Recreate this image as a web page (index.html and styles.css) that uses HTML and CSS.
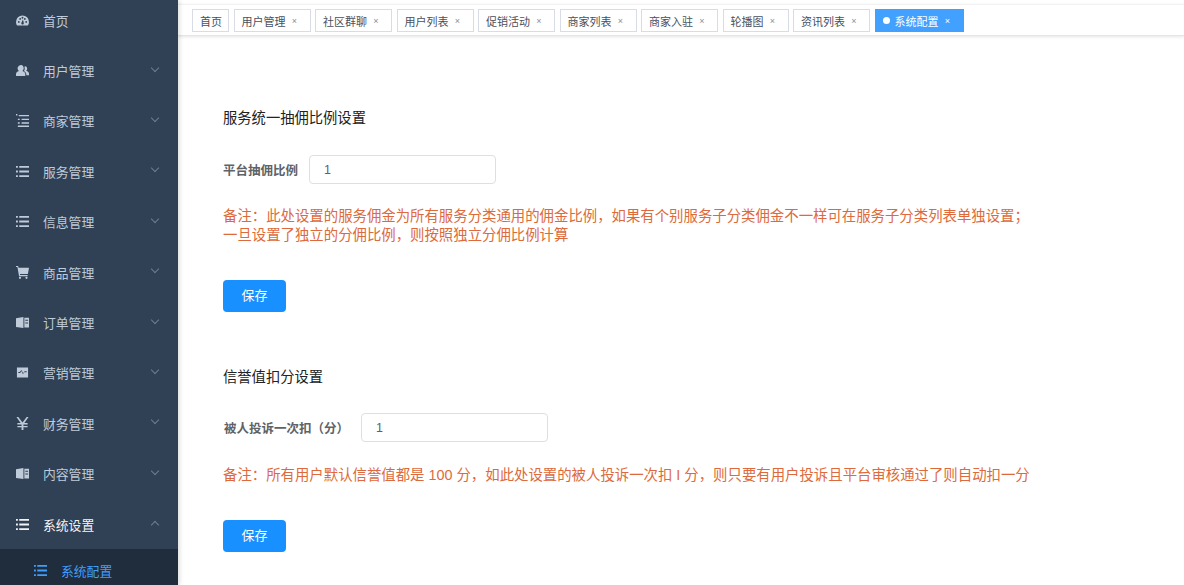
FILE: index.html
```html
<!DOCTYPE html>
<html lang="zh-CN">
<head>
<meta charset="utf-8">
<title>系统配置</title>
<link rel="stylesheet" href="styles.css">
</head>
<body>
<svg class="defs" width="0" height="0" aria-hidden="true">
  <symbol id="i-list" viewBox="0 0 14 14"><path d="M0 1h2v2H0zM3.500 1H14v2H3.500zM0 6h2v2H0zM3.500 6H14v2H3.500zM0 11h2v2H0zM3.500 11H14v2H3.500z"/></symbol>
  <symbol id="i-list2" viewBox="0 0 14 14"><path d="M0 0h1.500v1.500H0zM3 1h11v1.500H3zM2 5h2v1.500H2zM6 5h8v1.500H6zM2 9h2v1.500H2zM6 9h8v1.500H6zM2 12.500h12V14H2z"/></symbol>
  <symbol id="i-dash" viewBox="0 0 14 14"><path d="M7 1.500a7 7 0 0 0-7 7c0 1.500.5 2.900 1.300 4h11.400A7 7 0 0 0 14 8.500a7 7 0 0 0-7-7zM3 9.500a1 1 0 1 1 0-2 1 1 0 0 1 0 2zm1.500-3.200a1 1 0 1 1 0-2 1 1 0 0 1 0 2zM7 5a1 1 0 1 1 0-2 1 1 0 0 1 0 2zm1.200 5.800a1.400 1.400 0 0 1-2.500-1.100L7.500 6l.9 3.700c.1.400 0 .800-.2 1.100zm1.300-4.500a1 1 0 1 1 0-2 1 1 0 0 1 0 2zM11 9.500a1 1 0 1 1 0-2 1 1 0 0 1 0 2z"/></symbol>
  <symbol id="i-user" viewBox="0 0 14 14"><path d="M5.500 1c1.700 0 2.800 1.500 2.800 3.400 0 1.300-.6 2.500-1.500 3.200 2 .5 3.200 1.700 3.200 3.400V13H0v-2c0-1.700 1.200-2.900 3.200-3.400-.9-.7-1.500-1.900-1.500-3.200C1.700 2.500 3.800 1 5.500 1zM10 2.500c1.200.2 2 1.200 2 2.500 0 1-.5 1.900-1.200 2.400 1.400.4 3.200 1.300 3.200 2.800V12h-2.800c0-2-1-3.500-2.700-4.400.6-.8.900-1.500.9-2.400 0-.8-.2-1.600-.4-2.200z"/></symbol>
  <symbol id="i-cart" viewBox="0 0 14 14"><path d="M0 0h2.300l.5 2H14l-1.200 6.500H4.300l.2 1.300h8V11H3.300L1.500 1.200H0zM4.300 11.500a1.200 1.200 0 1 1 0 2.400 1.200 1.200 0 0 1 0-2.400zm7 0a1.200 1.200 0 1 1 0 2.400 1.200 1.200 0 0 1 0-2.400z"/></symbol>
  <symbol id="i-book" viewBox="0 0 14 14"><path d="M0 2.500 8 1v12l-8-1.200zM9 2h5v10.500H9zm1 2v1h3V4zm0 3v1h3V7z"/></symbol>
  <symbol id="i-chart" viewBox="0 0 14 14"><path fill-rule="evenodd" d="M1 1.500h12v11H1zM2.500 7.500h2l1.200-2 1.800 3.500 1.300-2.300h2.700v-1H9.300l-1.700 2-1.800-3.400L4 6.500H2.500z"/></symbol>
  <symbol id="i-yen" viewBox="0 0 14 14"><path d="M.5 0h2l4.500 6L11.500 0h2L9 6.500h3.500V8H8v1.700h4.500v1.400H8V14H6v-2.900H1.500V9.700H6V8H1.500V6.500H5z"/></symbol>
</svg>

<div class="app">
  <aside class="sidebar">
    <ul class="menu">
      <li class="menu-item"><svg class="icon"><use href="#i-dash"/></svg><span class="label">首页</span></li>
      <li class="menu-item"><svg class="icon"><use href="#i-user"/></svg><span class="label">用户管理</span><span class="chev"></span></li>
      <li class="menu-item"><svg class="icon"><use href="#i-list2"/></svg><span class="label">商家管理</span><span class="chev"></span></li>
      <li class="menu-item"><svg class="icon"><use href="#i-list"/></svg><span class="label">服务管理</span><span class="chev"></span></li>
      <li class="menu-item"><svg class="icon"><use href="#i-list"/></svg><span class="label">信息管理</span><span class="chev"></span></li>
      <li class="menu-item"><svg class="icon"><use href="#i-cart"/></svg><span class="label">商品管理</span><span class="chev"></span></li>
      <li class="menu-item"><svg class="icon"><use href="#i-book"/></svg><span class="label">订单管理</span><span class="chev"></span></li>
      <li class="menu-item"><svg class="icon"><use href="#i-chart"/></svg><span class="label">营销管理</span><span class="chev"></span></li>
      <li class="menu-item"><svg class="icon"><use href="#i-yen"/></svg><span class="label">财务管理</span><span class="chev"></span></li>
      <li class="menu-item"><svg class="icon"><use href="#i-book"/></svg><span class="label">内容管理</span><span class="chev"></span></li>
      <li class="menu-item open"><svg class="icon"><use href="#i-list"/></svg><span class="label">系统设置</span><span class="chev up"></span></li>
      <li class="sub-item"><svg class="icon"><use href="#i-list"/></svg><span class="label">系统配置</span></li>
    </ul>
  </aside>

  <main class="main">
    <nav class="tags">
      <span class="tag home">首页</span>
      <span class="tag">用户管理<i class="x">×</i></span>
      <span class="tag">社区群聊<i class="x">×</i></span>
      <span class="tag">用户列表<i class="x">×</i></span>
      <span class="tag">促销活动<i class="x">×</i></span>
      <span class="tag">商家列表<i class="x">×</i></span>
      <span class="tag">商家入驻<i class="x">×</i></span>
      <span class="tag">轮播图<i class="x">×</i></span>
      <span class="tag">资讯列表<i class="x">×</i></span>
      <span class="tag active"><b class="dot"></b>系统配置<i class="x">×</i></span>
    </nav>

    <div class="content">
      <section class="block first">
        <h2 class="title">服务统一抽佣比例设置</h2>
        <div class="field">
          <label class="field-label">平台抽佣比例</label>
          <input class="input" value="1">
        </div>
        <p class="note">备注：此处设置的服务佣金为所有服务分类通用的佣金比例，如果有个别服务子分类佣金不一样可在服务子分类列表单独设置；<br>一旦设置了独立的分佣比例，则按照独立分佣比例计算</p>
        <button class="btn">保存</button>
      </section>

      <section class="block second">
        <h2 class="title">信誉值扣分设置</h2>
        <div class="field">
          <label class="field-label">被人投诉一次扣（分）</label>
          <input class="input" value="1">
        </div>
        <p class="note">备注：所有用户默认信誉值都是 100 分，如此处设置的被人投诉一次扣 I 分，则只要有用户投诉且平台审核通过了则自动扣一分</p>
        <button class="btn">保存</button>
      </section>
    </div>
  </main>
</div>
</body>
</html>
```
FILE: styles.css
```css
* { box-sizing: border-box; }
html, body { margin: 0; height: 100%; overflow: hidden; background: #fff; }
body { font-family: "Liberation Sans", "Noto Sans CJK SC", sans-serif; }
.defs { position: absolute; }

.app { display: flex; height: 585px; }

.sidebar { width: 178px; flex: none; background: #304156; overflow: hidden; box-shadow: 2px 0 4px rgba(0,0,0,.12); z-index: 2; }
.menu { list-style: none; margin: -5px 0 0; padding: 0; }
.menu-item { height: 50.4px; display: flex; align-items: center; padding-left: 16px; color: #bfcbd9; font-size: 12.8px; position: relative; }
.menu-item .icon { width: 13px; height: 13px; fill: #bfcbd9; flex: none; margin-right: 14px; }
.menu-item.open { color: #f4f4f5; }
.menu-item.open .icon { fill: #f4f4f5; }
.chev { position: absolute; right: 20px; top: 50%; width: 6px; height: 6px; margin-top: -6px; border-right: 1px solid #6f7d8f; border-bottom: 1px solid #6f7d8f; transform: rotate(45deg); }
.chev.up { margin-top: -2px; transform: rotate(225deg); }
.sub-item { height: 50.4px; background: #1f2d3d; display: flex; align-items: center; padding: 0 0 7px 34px; color: #409eff; font-size: 12.8px; }
.sub-item .icon { width: 13px; height: 13px; fill: #409eff; margin-right: 14px; }

.main { flex: 1; min-width: 0; display: flex; flex-direction: column; }
.tags { height: 32px; flex: none; display: flex; align-items: flex-start; gap: 4.5px; padding: 4px 0 0 14px; background: #fff; border-top: 1px solid #f2f2f2; margin-top: 4px; margin-bottom: -4px; border-bottom: 1px solid #e4e6e8; box-shadow: 0 1px 3px rgba(0,0,0,.1); }
.tag { height: 23px; display: inline-flex; align-items: center; padding: 0 7px; border: 1px solid #d8dce5; background: #fff; font-size: 11px; color: #495060; white-space: nowrap; }
.tag.home { padding-right: 6px; }
.x { font-style: normal; font-size: 9px; color: #8a8f99; margin-left: 6px; width: 6px; margin-right: 5px; text-align: center; }
.tag.active { background: #42a0ff; border-color: #42a0ff; color: #fff; }
.tag.active .x { color: #fff; }
.dot { width: 7px; height: 7px; border-radius: 50%; background: #fff; margin-right: 5px; }

.content { flex: 1; padding-left: 45px; color: #303133; }
.block { display: flex; flex-direction: column; align-items: flex-start; }
.block.first { padding-top: 76px; }
.block.second { padding-top: 55px; }
.title { margin: 0; font-size: 14.3px; font-weight: 400; line-height: 20px; color: #222; }
.field { display: flex; align-items: center; margin-top: 27px; }
.field-label { font-size: 12.5px; font-weight: 700; color: #606266; margin-right: 11px; white-space: nowrap; }
.block.second .field { margin-top: 26px; }
.block.second .field-label { margin-left: 1px; margin-right: 12px; }
.input { width: 187px; height: 29px; border: 1px solid #dcdfe6; border-radius: 4px; padding: 0 14px; font: 12.5px "Liberation Sans", sans-serif; color: #606266; outline: none; }
.note { margin: 23px 0 0; font-size: 14.4px; line-height: 19px; color: #dd6a3c; white-space: nowrap; }
.block.second .note { margin-top: 24px; }
.btn { margin-top: 35px; width: 63px; height: 32px; padding: 0 0 4px; border: 0; border-radius: 4px; background: #1890ff; color: #fff; font: 13px "Noto Sans CJK SC", sans-serif; }
```
